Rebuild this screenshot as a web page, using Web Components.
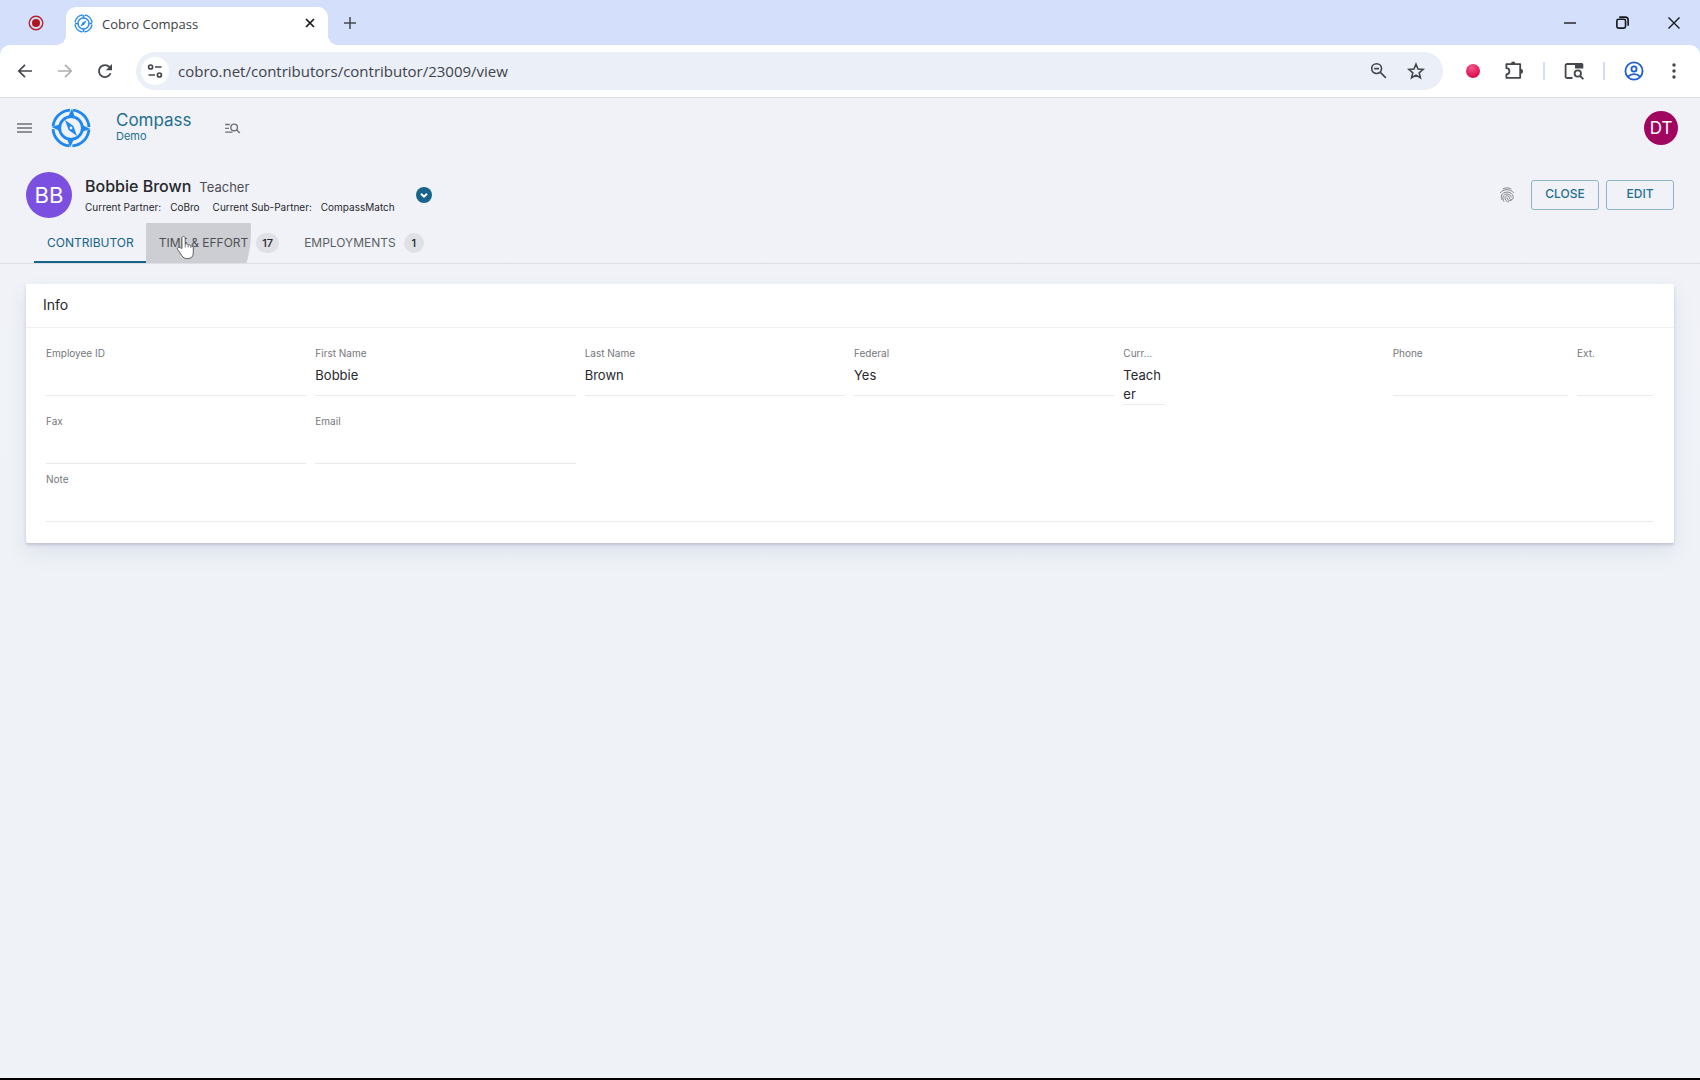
<!DOCTYPE html>
<html lang="en">
<head>
<meta charset="utf-8">
<title>Cobro Compass</title>
<style>
  html, body { margin: 0; height: 100%; }
  body { font-family: Inter, "Liberation Sans", sans-serif; color: #26282c; }
</style>
</head>
<body>
<browser-window>
  <browser-titlebar slot="chrome"></browser-titlebar>
  <browser-toolbar slot="chrome"></browser-toolbar>
  <app-header product="Compass" site="Demo" user="DT"></app-header>
  <record-header></record-header>
  <record-tabs></record-tabs>
  <info-card heading="Info">
    <view-field label="Employee ID"></view-field>
    <view-field label="First Name">Bobbie</view-field>
    <view-field label="Last Name">Brown</view-field>
    <view-field label="Federal">Yes</view-field>
    <view-field label="Curr..." class="narrow">Teacher</view-field>
    <field-group>
      <view-field label="Phone" class="wide"></view-field>
      <view-field label="Ext." class="short"></view-field>
    </field-group>
    <view-field label="Fax"></view-field>
    <view-field label="Email"></view-field>
    <view-field label="Note" class="full"></view-field>
  </info-card>
</browser-window>

<script>
const define = (name, html, setup) => {
  const template = document.createElement('template');
  template.innerHTML = html;
  customElements.define(name, class extends HTMLElement {
    constructor() {
      super();
      this.attachShadow({ mode: 'open' }).append(template.content.cloneNode(true));
    }
    connectedCallback() {
      if (setup) setup(this, this.shadowRoot);
    }
  });
};

const line = (w, body, color = 'currentColor') =>
  `<g fill="none" stroke="${color}" stroke-width="${w}">${body}</g>`;

const ICONS = {
  record: ['0 0 16 16', '<circle cx="8" cy="8" r="6.8" fill="none" stroke="#b3222d" stroke-width="1.4"/><circle cx="8" cy="8" r="4" fill="#b3151f"/>'],
  compass: ['0 0 40 40', `
    <g fill="none" stroke="#1e88f0" stroke-width="2.8">
      <circle cx="20" cy="20" r="18" stroke-dasharray="25.07 3.2" stroke-dashoffset="-1.6"/>
      <circle cx="20" cy="20" r="11.4"/></g>
    <g fill="#1e88f0">
      <path d="M16.6 9.8 24 9.8 21 .6z"/><path d="M16 30.2 23.4 30.2 19 39.4z"/>
      <path d="M9.8 16 9.8 23.4.6 19z"/><path d="M30.2 16.6 30.2 24 39.4 21z"/>
      <path fill-rule="evenodd" d="M14 12 22.4 18.1 26 28 17.6 21.9zM20 18.6a1.4 1.4 0 1 0 0 2.8 1.4 1.4 0 0 0 0-2.8z"/></g>`],
  favicon: ['0 0 20 20', line(1.5, '<circle cx="10" cy="10" r="9" stroke-dasharray="11.8 2.34" stroke-dashoffset="-1.2"/><circle cx="10" cy="10" r="5.8"/><path d="M10 1v3.5M10 15.5V19M1 10h3.5M15.5 10H19" stroke-width="1.8"/>', '#2b8ced') + '<path d="M13.4 6.6 11 11l-4.4 2.4L9 9z" fill="#2b8ced"/>'],
  close: ['0 0 12 12', line(1.7, '<path d="M2 2l8 8M10 2l-8 8"/>')],
  plus: ['0 0 12 12', line(1.5, '<path d="M6 0v12M0 6h12"/>')],
  back: ['0 0 16 16', line(1.7, '<path d="M15 8H2M8 1.8 1.8 8 8 14.2"/>')],
  forward: ['0 0 16 16', line(1.7, '<path d="M1 8h13M8 1.8 14.2 8 8 14.2"/>')],
  reload: ['0 0 16 16', line(1.8, '<path d="M13.6 10.2A6 6 0 1 1 12.6 4.2L14 5.8"/>') + '<path d="M15 1v6.2H8.8z" fill="currentColor"/>'],
  tune: ['0 0 16 16', line(1.7, '<circle cx="3.6" cy="4" r="2"/><path d="M8 4h6.5M1.5 12H8"/><circle cx="12.4" cy="12" r="2"/>')],
  zoomout: ['0 0 18 18', line(1.7, '<circle cx="7" cy="7" r="5.2"/><path d="M11 11l5.8 5.8M4.4 7h5.2"/>')],
  star: ['0 0 18 18', line(1.6, '<path d="M9 2.2l2 4.8 5.1.4-3.9 3.4 1.2 5L9 13.1l-4.4 2.7 1.2-5L1.9 7.4 7 7z"/>')],
  puzzle: ['0 0 20 20', line(1.8, '<path d="M2.4 3.2h13.8v13.6H2.4v-3.4c4-.4 4-6 0-6.2z" stroke-linejoin="round"/>') + '<path d="M7 3a2.2 2.4 0 0 1 4.4 0zM16.5 7.7a2.5 2.5 0 0 1 0 5z" fill="currentColor"/>'],
  tabsearch: ['0 0 20 20', line(1.8, '<path d="M8.5 17H3.2a1.6 1.6 0 0 1-1.6-1.6V4.6A1.6 1.6 0 0 1 3.2 3H18"/><circle cx="13.8" cy="12.5" r="3.2"/><path d="M16 15l3.4 3.2"/>') + '<path d="M11 2.1h6.8A1.5 1.5 0 0 1 19.3 3.6V7.5H11z" fill="currentColor"/>'],
  profile: ['0 0 20 20', line(1.8, '<circle cx="10" cy="10" r="8.6"/><circle cx="10" cy="8" r="2.6"/><path d="M4 15.6c3-3.4 9-3.4 12 0"/>')],
  more: ['0 0 18 18', '<g fill="currentColor"><circle cx="9" cy="3" r="1.7"/><circle cx="9" cy="9" r="1.7"/><circle cx="9" cy="15" r="1.7"/></g>'],
  minimize: ['0 0 12 12', line(1.4, '<path d="M0 6h12"/>')],
  restore: ['0 0 12 12', line(1.5, '<rect x=".8" y="3" width="8" height="8.2" rx="1.5"/><path d="M3 1h5.5A2.7 2.7 0 0 1 11.2 3.7V9"/>')],
  quit: ['0 0 12 12', line(1.4, '<path d="M.5.5l11 11M11.5.5l-11 11"/>')],
  menu: ['0 0 15 10', line(1.5, '<path d="M0 1h15M0 5h15M0 9h15"/>')],
  find: ['0 0 18 12', line(1.5, '<path d="M1 1.6h5M1 5.8h4M1 10h8"/><circle cx="10.8" cy="4.8" r="3.6"/><path d="M13.4 7.4 17 11"/>')],
  chevron: ['0 0 16 16', line(2, '<path d="M5 6.7l3 3 3-3"/>')],
  fingerprint: ['0 0 18 18', line(.9, `<path d="M4.2 2.3c3-1.7 6.6-1.7 9.6 0M1.3 6.8c3.6-5 11.8-5 15.4 0M3.5 14.5C1.6 10.8 2.3 6.3 9 5.7c5.5 0 8 4.6 6.6 7.6-1.3 1.8-3.9 1-4.1-1.3-.3-2.8-4.4-2.9-4.8-.3-.2 2.4 1.6 4.7 4.3 5.3M5.6 16.5C3.2 12.6 4.5 7.9 9 7.9c3.2 0 4.7 2 4.7 4M9 11.8c.1 2.8 2.2 4 5 3.5"/>`)],
  hand: ['0 0 20 26', '<path d="M6.3 14V3.2c0-2.4 3.4-2.4 3.4 0v6.3c1-.8 2.8-.5 3.1.8 1.2-.5 2.5 0 2.8 1.2 1.3-.3 2.6.5 2.6 2v5.2c0 3.8-2 6-6 6-3.2 0-4.8-1-6.3-3.5L1.5 14.8c-.9-1.8 1.5-3 2.7-1.7z" fill="#fff" stroke="#55575c" stroke-width="1"/><path d="M9.7 9.5v3.5M12.8 10.5V13M15.6 11.5v2" stroke="#77797d" fill="none"/>']
};

/* Inline icon: <ui-icon name size>; height follows the view box. */
define('ui-icon', `<style>:host{display:inline-flex;flex:none}svg{display:block}</style>`, (host, root) => {
  const [box, body] = ICONS[host.getAttribute('name')];
  const [, , w, h] = box.split(' ').map(Number);
  const size = Number(host.getAttribute('size') || w);
  root.innerHTML += `<svg viewBox="${box}" width="${size}" height="${Math.round(size * h / w)}" aria-hidden="true">${body}</svg>`;
});

define('icon-button', `
<style>
  :host{display:block;flex:none}
  button{display:flex;align-items:center;justify-content:center;width:100%;height:100%;padding:0;border:0;background:none;color:inherit}
</style>
<button type="button"></button>`, (host, root) => {
  const icon = document.createElement('ui-icon');
  icon.setAttribute('name', host.getAttribute('icon'));
  if (host.hasAttribute('size')) icon.setAttribute('size', host.getAttribute('size'));
  const button = root.querySelector('button');
  button.setAttribute('aria-label', host.getAttribute('label'));
  button.replaceChildren(icon);
});

define('browser-titlebar', `
<style>
  :host{display:flex;height:45px;background:#d4e0fb;color:#17191c;font-family:"Open Sans","Noto Sans",sans-serif}
  .pin{width:72px;height:45px}
  .tab{position:relative;display:flex;align-items:center;gap:9px;box-sizing:border-box;width:262px;height:38px;margin:7px 0 0 -6px;padding:0 9px 6px 8px;background:#fff;border-radius:10px 10px 0 0;font-size:13px;color:#3c4046}
  .tab::before,.tab::after{content:"";position:absolute;bottom:0;width:10px;height:10px}
  .tab::before{left:-10px;background:radial-gradient(circle at 0 0,transparent 10px,#fff 10px)}
  .tab::after{right:-10px;background:radial-gradient(circle at 100% 0,transparent 10px,#fff 10px)}
  .title{flex:1;padding-top:1px}
  .x{width:18px;height:20px;color:#17191c}
  .new{width:44px;color:#44484e}
  .win{display:flex;margin-left:auto}
  .win icon-button{width:52px}
</style>
<icon-button class="pin" icon="record" label="Recording"></icon-button>
<div class="tab"><ui-icon name="favicon" size="19"></ui-icon><span class="title">Cobro Compass</span><icon-button class="x" icon="close" label="Close tab"></icon-button></div>
<icon-button class="new" icon="plus" label="New tab"></icon-button>
<div class="win">
  <icon-button icon="minimize" label="Minimize"></icon-button>
  <icon-button icon="restore" size="13" label="Restore"></icon-button>
  <icon-button icon="quit" label="Close window"></icon-button>
</div>`);

define('browser-toolbar', `
<style>
  :host{display:block;background:#d4e0fb;color:#44474c;font-family:"Open Sans","Noto Sans",sans-serif}
  .bar{display:flex;align-items:center;box-sizing:border-box;height:53px;padding:0 6px 1px 5px;background:#fff;border-bottom:1px solid #dcdfe8;border-radius:10px 10px 0 0}
  .nav{width:40px;height:38px}
  .off{color:#adafb3}
  .omni{display:flex;align-items:center;flex:1;height:38px;margin:0 12px 0 11px;border-radius:19px;background:#ebeff8}
  .site{width:28px;height:28px;margin:0 9px 0 5px;border-radius:50%;background:#fff}
  input{flex:1;min-width:0;padding:0;border:0;outline:0;background:none;font:15px/24px "Open Sans","Noto Sans",sans-serif;color:#3f4349}
  .act{width:37px;height:38px}
  .omni .act:last-child{margin-right:9px}
  .dot{width:14px;height:14px;margin:0 14px 0 11px;border-radius:50%;background:radial-gradient(circle at 40% 25%,#f0568a,#dc1250 70%)}
  .ext{width:40px;height:38px}
  hr{width:2px;height:18px;margin:0 9px;border:0;background:#cfdffb}
  .me{color:#1f5fd0}
</style>
<div class="bar">
  <icon-button class="nav" icon="back" label="Back"></icon-button>
  <icon-button class="nav off" icon="forward" label="Forward"></icon-button>
  <icon-button class="nav" icon="reload" label="Reload"></icon-button>
  <div class="omni">
    <icon-button class="site" icon="tune" label="Site information"></icon-button>
    <input type="text" aria-label="Address" value="cobro.net/contributors/contributor/23009/view">
    <icon-button class="act" icon="zoomout" size="17" label="Zoom"></icon-button>
    <icon-button class="act" icon="star" label="Bookmark"></icon-button>
  </div>
  <span class="dot"></span>
  <icon-button class="ext" icon="puzzle" label="Extensions"></icon-button>
  <hr>
  <icon-button class="ext" icon="tabsearch" label="Search tabs"></icon-button>
  <hr>
  <icon-button class="ext me" icon="profile" label="Profile"></icon-button>
  <icon-button class="ext" icon="more" label="Menu"></icon-button>
</div>`);

define('browser-window', `
<style>
  :host{display:flex;flex-direction:column;box-sizing:border-box;min-height:100vh;border-bottom:2px solid #000;background:#eff3f7}
  main{flex:1;background:linear-gradient(#f1f2f8,#eff3f7 480px)}
</style>
<slot name="chrome"></slot>
<main><slot></slot></main>`);

define('user-avatar', `
<style>
  :host{display:flex;align-items:center;justify-content:center;flex:none;border-radius:50%;color:#fff}
</style><slot></slot>`);

define('app-header', `
<style>
  :host{display:flex;align-items:center;height:60px;padding:0 22px 0 4px;color:#6d7075}
  .menu{width:40px;height:40px}
  .logo{margin:0 25px 0 7px}
  .brand{display:flex;flex-direction:column;padding-bottom:2px;color:#246f8e;text-decoration:none}
  .product{font-size:17px;line-height:18px}
  .site{font-size:11px;line-height:14px}
  .find{width:40px;height:40px;margin-left:21px}
  user-avatar{width:34px;height:34px;margin-left:auto;background:#a1055f;font-size:17px}
</style>
<icon-button class="menu" icon="menu" label="Menu"></icon-button>
<ui-icon class="logo" name="compass"></ui-icon>
<a class="brand" href="#"><span class="product"></span><span class="site"></span></a>
<icon-button class="find" icon="find" size="17" label="Search"></icon-button>
<user-avatar></user-avatar>`, (host, root) => {
  root.querySelector('.product').textContent = host.getAttribute('product');
  root.querySelector('.site').textContent = host.getAttribute('site');
  root.querySelector('user-avatar').textContent = host.getAttribute('user');
});

define('outline-button', `
<style>
  :host{display:block}
  button{box-sizing:border-box;width:68px;height:30px;padding:0 0 2px;border:1px solid #8fb5c4;border-radius:3px;background:none;color:#246f8e;font:500 12px/16px Inter,sans-serif}
</style>
<button type="button"><slot></slot></button>`);

define('record-header', `
<style>
  :host{display:flex;align-items:center;height:65px;padding:9px 26px 0 26px;box-sizing:border-box}
  user-avatar{width:46px;height:46px;background:#7b4fe0;font-size:22px}
  .who{margin-left:13px}
  h1{margin:0;font-size:16px;line-height:20px;font-weight:500}
  h1 small{margin-left:8px;font-size:13px;font-weight:400;color:#4c4f54}
  dl{display:flex;gap:13px;margin:3px 0 0;font-size:10px;line-height:14px}
  dl div{display:flex;gap:9px}
  dd{margin:0}
  .expand{width:16px;height:16px;margin-left:21px;border-radius:50%;background:#16648a;color:#fff}
  .print{width:32px;height:32px;margin-left:auto;color:#66696e}
  .actions{display:flex;gap:7px;margin-left:8px}
</style>
<user-avatar>BB</user-avatar>
<div class="who">
  <h1>Bobbie Brown<small>Teacher</small></h1>
  <dl><div><dt>Current Partner:</dt><dd>CoBro</dd></div><div><dt>Current Sub-Partner:</dt><dd>CompassMatch</dd></div></dl>
</div>
<icon-button class="expand" icon="chevron" label="More details"></icon-button>
<icon-button class="print" icon="fingerprint" size="16" label="Audit trail"></icon-button>
<div class="actions"><outline-button>CLOSE</outline-button><outline-button>EDIT</outline-button></div>`);

define('record-tab', `
<style>
  :host{display:block;position:relative}
  button{position:relative;display:flex;align-items:center;gap:8px;overflow:hidden;box-sizing:border-box;height:40px;padding:0 12px 0 13px;border:0;background:none;font:400 12px/16px Inter,sans-serif;color:#5c5f64}
  :host([selected]) button{color:#16648a;box-shadow:inset 0 -2px #16648a}
  .badge{display:none;box-sizing:border-box;min-width:20px;height:20px;padding:0 6px;border-radius:10px;background:#e0e1e6;color:#26282c;font-size:11px;font-weight:500;line-height:20px;text-align:center}
  :host([count]) .badge{display:block}
  .ripple{display:none;position:absolute;left:-113px;top:-100px;width:218px;height:218px;border-radius:50%;background:rgba(0,0,0,.15)}
  .hand{display:none;position:absolute;left:30px;top:12px}
  :host([pressed]) .ripple{display:block}
  :host([pressed]) .hand{display:flex}
</style>
<button type="button" role="tab"><span class="ripple"></span><slot></slot><span class="badge"></span></button>
<ui-icon class="hand" name="hand" size="19"></ui-icon>`, (host, root) => {
  root.querySelector('.badge').textContent = host.getAttribute('count') || '';
  if (!host.hasAttribute('count')) root.querySelector('.badge').remove();
  root.querySelector('button').setAttribute('aria-selected', host.hasAttribute('selected'));
});

define('record-tabs', `
<style>:host{display:flex;height:40px;padding-left:34px;border-bottom:1px solid #dcdfe6}</style>
<record-tab selected>CONTRIBUTOR</record-tab>
<record-tab count="17" pressed>TIME &amp; EFFORT</record-tab>
<record-tab count="1">EMPLOYMENTS</record-tab>`);

define('info-card', `
<style>
  :host{display:block;margin:20px 26px 0;background:#fff;border-radius:2px;box-shadow:0 2px 3px rgba(90,90,120,.25),0 10px 20px rgba(110,110,170,.13)}
  h2{margin:0;padding:11px 17px 12px;border-bottom:1px solid #eff0f4;font-size:14px;line-height:20px;font-weight:400}
  .grid{display:grid;grid-template-columns:repeat(6,1fr);padding:18px 12px 21px 20px}
  ::slotted(.full){grid-column:1/-1}
</style>
<h2></h2><div class="grid"><slot></slot></div>`, (host, root) => {
  root.querySelector('h2').textContent = host.getAttribute('heading');
});

define('field-group', `
<style>
  :host{display:flex}
  ::slotted(.wide){flex:1}
  ::slotted(.short){width:85px}
</style><slot></slot>`);

define('view-field', `
<style>
  :host{display:block;box-sizing:border-box;padding-right:9px;padding-bottom:8px}
  :host(.narrow){width:51px;padding-bottom:9px}
  :host(.full){padding-bottom:0}
  label{display:block;white-space:nowrap;font-size:10px;line-height:14px;color:#74777c}
  output{display:block;box-sizing:border-box;min-height:36px;padding:6px 0 0;border-bottom:1px solid #e8eaee;font-size:13px;line-height:19px;overflow-wrap:anywhere}
</style>
<label for="value"></label><output id="value"><slot></slot></output>`, (host, root) => {
  root.querySelector('label').textContent = host.getAttribute('label');
});
</script>
</body>
</html>
